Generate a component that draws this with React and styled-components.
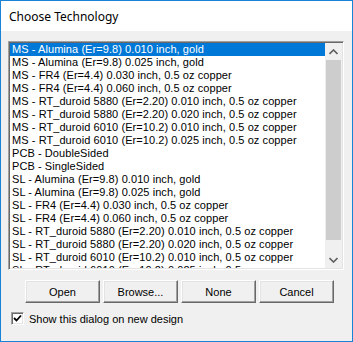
import React from "react";
import styled, { createGlobalStyle } from "styled-components";

const GlobalStyle = createGlobalStyle`
  html, body { margin: 0; padding: 0; background: #ffffff; }
  * { box-sizing: border-box; }
`;

const Window = styled.div`
  width: 353px;
  height: 342px;
  border: 1px solid #1883d7;
  display: flex;
  flex-direction: column;
  background: #f0f0f0;
  overflow: hidden;
`;

const TitleBar = styled.div`
  height: 30px;
  background: #ffffff;
  display: flex;
  align-items: center;
  padding-left: 8px;
  font-family: "Noto Sans", "Open Sans", sans-serif;
  font-size: 12px;
  color: #000000;
`;

const Client = styled.div`
  flex: 1;
  display: flex;
  flex-direction: column;
  padding: 10px 8px 0 7px;
  font-family: "Liberation Sans", Arial, sans-serif;
  font-size: 11px;
  color: #000000;
`;

const ListBox = styled.div`
  height: 229px;
  display: flex;
  background: #ffffff;
  border-style: solid;
  border-width: 1px;
  border-color: #a0a0a0 #ffffff #ffffff #a0a0a0;
  box-shadow: inset 1px 1px 0 #696969, inset -1px -1px 0 #e3e3e3;
  padding: 1px;
`;

const Items = styled.div`
  flex: 1;
  overflow: hidden;
`;

const Row = styled.div`
  height: 13px;
  line-height: 13px;
  padding-left: 2px;
  white-space: nowrap;
  letter-spacing: 0.07px;
  background: ${(p) => (p.$selected ? "#0078d7" : "transparent")};
  color: ${(p) => (p.$selected ? "#ffffff" : "#000000")};
`;

const ScrollBar = styled.div`
  width: 17px;
  display: flex;
  flex-direction: column;
  background: #f0f0f0;
`;

const Arrow = styled.div`
  height: 17px;
  display: flex;
  align-items: center;
  justify-content: center;
`;

const Track = styled.div`
  flex: 1;
  padding: 0 1px;
  display: flex;
  flex-direction: column;
`;

const Thumb = styled.div`
  background: #cdcdcd;
  height: 180px;
`;

const ButtonRow = styled.div`
  display: flex;
  gap: 3px;
  margin-top: 10px;
  padding-left: 17px;
`;

const Button = styled.button`
  width: 75px;
  height: 23px;
  margin: 0;
  padding: 0;
  font-family: "Liberation Sans", Arial, sans-serif;
  font-size: 11px;
  color: #000000;
  background: #f0f0f0;
  border-style: solid;
  border-width: 1px;
  border-color: #ffffff #696969 #696969 #ffffff;
  box-shadow: inset -1px -1px 0 #a0a0a0, inset 1px 1px 0 #e3e3e3;
`;

const CheckRow = styled.label`
  display: flex;
  align-items: center;
  gap: 5px;
  margin-top: 9px;
  padding-left: 3px;
`;

const Box = styled.span`
  width: 13px;
  height: 13px;
  background: #ffffff;
  border-style: solid;
  border-width: 1px;
  border-color: #a0a0a0 #ffffff #ffffff #a0a0a0;
  box-shadow: inset 1px 1px 0 #696969, inset -1px -1px 0 #e3e3e3;
  display: flex;
  align-items: center;
  justify-content: center;
`;

const items = [
  "MS - Alumina (Er=9.8) 0.010 inch, gold",
  "MS - Alumina (Er=9.8) 0.025 inch, gold",
  "MS - FR4 (Er=4.4) 0.030 inch, 0.5 oz copper",
  "MS - FR4 (Er=4.4) 0.060 inch, 0.5 oz copper",
  "MS - RT_duroid 5880 (Er=2.20) 0.010 inch, 0.5 oz copper",
  "MS - RT_duroid 5880 (Er=2.20) 0.020 inch, 0.5 oz copper",
  "MS - RT_duroid 6010 (Er=10.2) 0.010 inch, 0.5 oz copper",
  "MS - RT_duroid 6010 (Er=10.2) 0.025 inch, 0.5 oz copper",
  "PCB - DoubleSided",
  "PCB - SingleSided",
  "SL - Alumina (Er=9.8) 0.010 inch, gold",
  "SL - Alumina (Er=9.8) 0.025 inch, gold",
  "SL - FR4 (Er=4.4) 0.030 inch, 0.5 oz copper",
  "SL - FR4 (Er=4.4) 0.060 inch, 0.5 oz copper",
  "SL - RT_duroid 5880 (Er=2.20) 0.010 inch, 0.5 oz copper",
  "SL - RT_duroid 5880 (Er=2.20) 0.020 inch, 0.5 oz copper",
  "SL - RT_duroid 6010 (Er=10.2) 0.010 inch, 0.5 oz copper",
  "SL - RT_duroid 6010 (Er=10.2) 0.025 inch, 0.5 oz copper",
];

const Chevron = ({ up }) => (
  <svg width="9" height="6" viewBox="0 0 9 6">
    <polyline
      points={up ? "0.5,5 4.5,1 8.5,5" : "0.5,1 4.5,5 8.5,1"}
      fill="none"
      stroke="#606060"
      strokeWidth="1.6"
    />
  </svg>
);

export default function App() {
  return (
    <>
      <GlobalStyle />
      <Window>
        <TitleBar>Choose Technology</TitleBar>
        <Client>
          <ListBox>
            <Items>
              {items.map((t, i) => (
                <Row key={i} $selected={i === 0}>
                  {t}
                </Row>
              ))}
            </Items>
            <ScrollBar>
              <Arrow>
                <Chevron up />
              </Arrow>
              <Track>
                <Thumb />
              </Track>
              <Arrow>
                <Chevron />
              </Arrow>
            </ScrollBar>
          </ListBox>
          <ButtonRow>
            <Button>Open</Button>
            <Button>Browse...</Button>
            <Button>None</Button>
            <Button>Cancel</Button>
          </ButtonRow>
          <CheckRow>
            <Box>
              <svg width="9" height="9" viewBox="0 0 9 9">
                <polyline points="1,4 3.5,6.5 8,1.5" fill="none" stroke="#000" strokeWidth="1.8" />
              </svg>
            </Box>
            <span>Show this dialog on new design</span>
          </CheckRow>
        </Client>
      </Window>
    </>
  );
}
